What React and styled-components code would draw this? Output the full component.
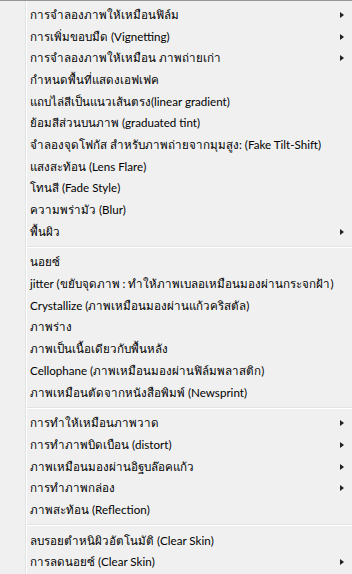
import React from "react";
import styled, { createGlobalStyle } from "styled-components";

const GlobalStyle = createGlobalStyle`
  html, body {
    margin: 0;
    padding: 0;
    background: #f0f0f0;
  }
  body {
    font-family: "Segoe UI", Tahoma, Lato, "Noto Sans", sans-serif;
  }
`;

const Menu = styled.div`
  width: 352px;
  height: 574px;
  box-sizing: border-box;
  border-top: 1px solid #979797;
  padding-top: 3px;
  display: flex;
  flex-direction: column;
  overflow: hidden;
  background: linear-gradient(
    to right,
    #f0f0f0 25px,
    #e2e3e3 25px,
    #e2e3e3 26px,
    #ffffff 26px,
    #ffffff 27px,
    #f0f0f0 27px
  );
`;

const Item = styled.div`
  height: 21.7px;
  flex: none;
  display: flex;
  align-items: center;
  padding-left: 30px;
  padding-right: 8px;
  font-size: 11.6px;
  color: #000;
  white-space: nowrap;
`;

const Label = styled.span`
  flex: 1;
`;

const Arrow = styled.span`
  width: 0;
  height: 0;
  border-top: 3.5px solid transparent;
  border-bottom: 3.5px solid transparent;
  border-left: 4px solid #222;
`;

const Separator = styled.div`
  flex: none;
  height: 9px;
  margin-left: 27px;
  display: flex;
  flex-direction: column;
  justify-content: center;

  &::before {
    content: "";
    height: 1px;
    background: #e2e3e3;
  }
  &::after {
    content: "";
    height: 1px;
    background: #ffffff;
  }
`;

const groups = [
  [
    ["การจำลองภาพให้เหมือนฟิล์ม", true],
    ["การเพิ่มขอบมืด (Vignetting)", true],
    ["การจำลองภาพให้เหมือน ภาพถ่ายเก่า", true],
    ["กำหนดพื้นที่แสดงเอฟเฟค"],
    ["แถบไล่สีเป็นแนวเส้นตรง(linear gradient)"],
    ["ย้อมสีส่วนบนภาพ (graduated tint)"],
    ["จำลองจุดโฟกัส สำหรับภาพถ่ายจากมุมสูง: (Fake Tilt-Shift)"],
    ["แสงสะท้อน (Lens Flare)"],
    ["โทนสี (Fade Style)"],
    ["ความพร่ามัว (Blur)"],
    ["พื้นผิว", true],
  ],
  [
    ["นอยซ์"],
    ["jitter (ขยับจุดภาพ : ทำให้ภาพเบลอเหมือนมองผ่านกระจกฝ้า)"],
    ["Crystallize (ภาพเหมือนมองผ่านแก้วคริสตัล)"],
    ["ภาพร่าง"],
    ["ภาพเป็นเนื้อเดียวกับพื้นหลัง"],
    ["Cellophane (ภาพเหมือนมองผ่านฟิล์มพลาสติก)"],
    ["ภาพเหมือนตัดจากหนังสือพิมพ์ (Newsprint)"],
  ],
  [
    ["การทำให้เหมือนภาพวาด", true],
    ["การทำภาพบิดเบือน (distort)", true],
    ["ภาพเหมือนมองผ่านอิฐบล๊อคแก้ว", true],
    ["การทำภาพกล่อง", true],
    ["ภาพสะท้อน (Reflection)"],
  ],
  [
    ["ลบรอยตำหนิผิวอัตโนมัติ (Clear Skin)"],
    ["การลดนอยซ์ (Clear Skin)", true],
  ],
];

export default function App() {
  return (
    <>
      <GlobalStyle />
      <Menu>
        {groups.map((group, gi) => (
          <React.Fragment key={gi}>
            {gi > 0 && <Separator />}
            {group.map(([label, sub]) => (
              <Item key={label}>
                <Label>{label}</Label>
                {sub && <Arrow />}
              </Item>
            ))}
          </React.Fragment>
        ))}
      </Menu>
    </>
  );
}
